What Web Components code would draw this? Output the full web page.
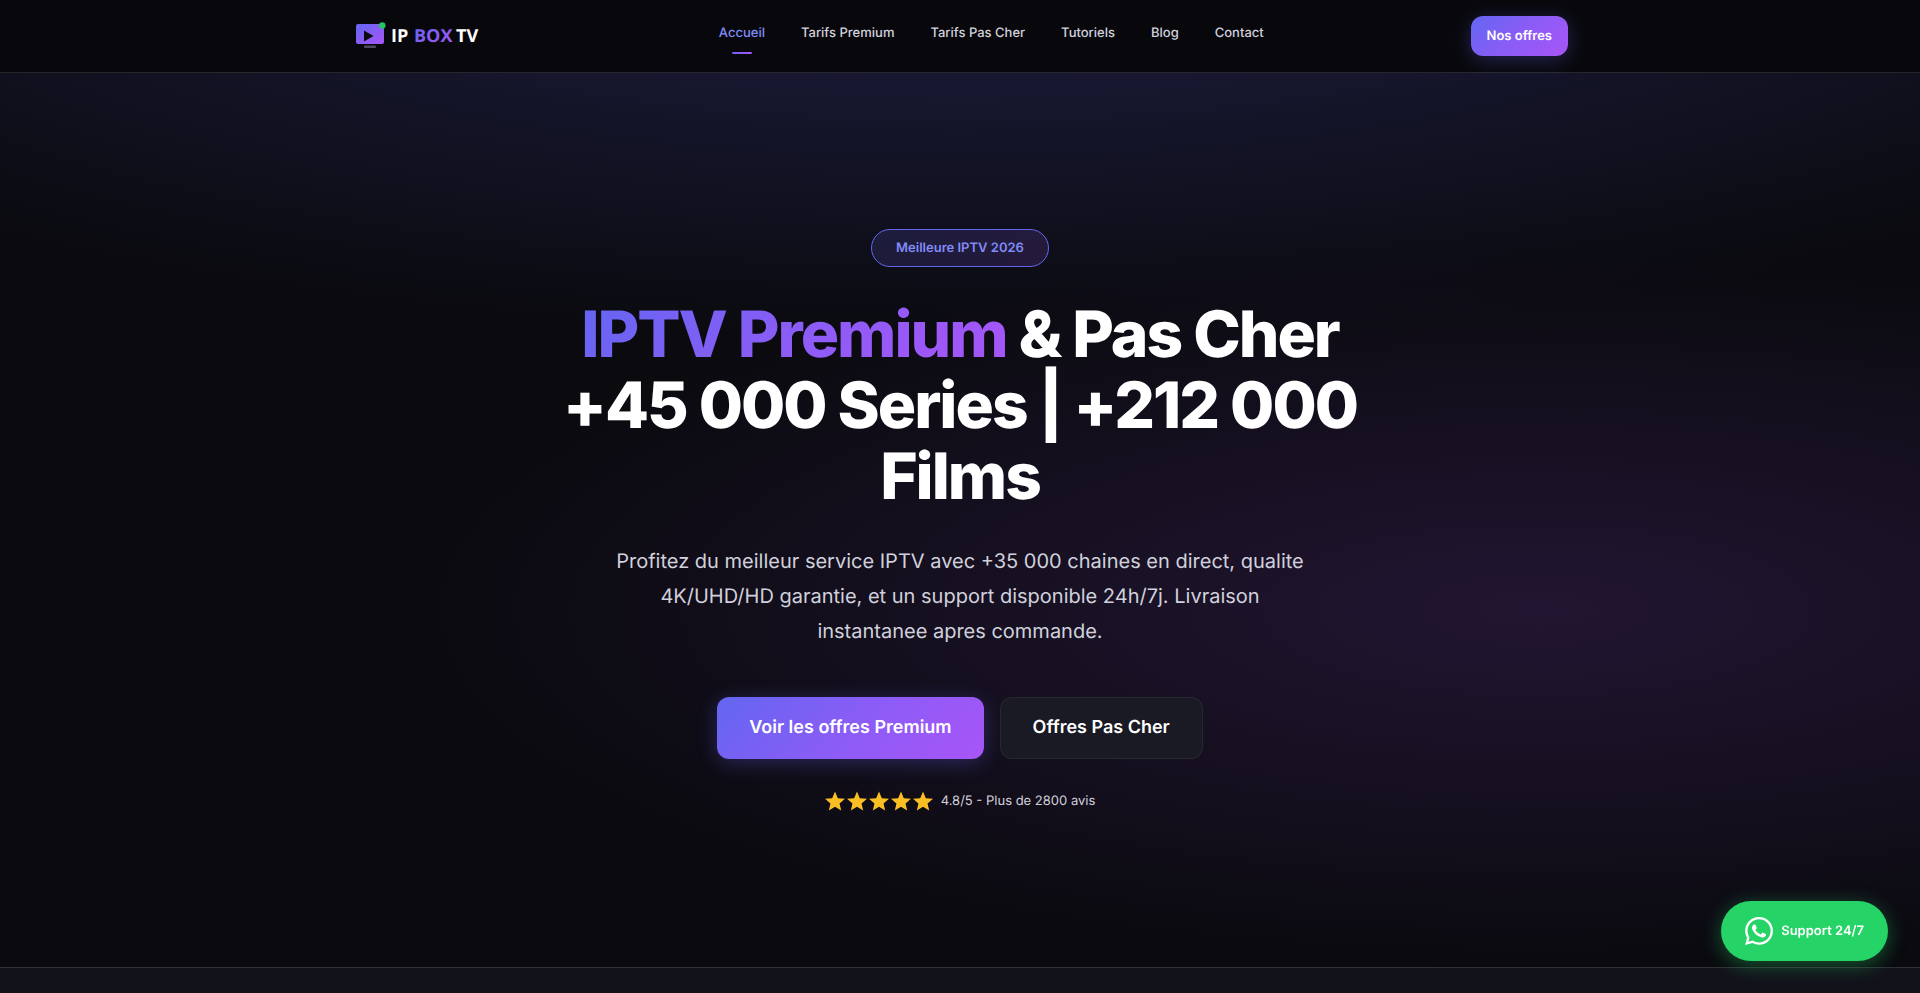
<!DOCTYPE html>
<html lang="fr">
<head>
<meta charset="utf-8">
<meta name="viewport" content="width=device-width, initial-scale=1">
<title>IP BOX TV</title>
<style>
  :root {
    --bg: #0a0a0f;
    --bg-alt: #12121a;
    --card: #1a1a24;
    --text: #ffffff;
    --muted: #d1d1dd;
    --indigo: #6366f1;
    --indigo-light: #818cf8;
    --gradient: linear-gradient(135deg, #6366f1 0%, #8b5cf6 50%, #a855f7 100%);
    --line: rgba(255, 255, 255, 0.13);
  }
  body {
    display: flex;
    flex-direction: column;
    min-height: 100vh;
    margin: 0;
    background: var(--bg);
    color: var(--text);
    font-family: Inter, "Liberation Sans", sans-serif;
    text-rendering: geometricPrecision;
    overflow-x: hidden;
  }
  main { display: flex; flex: 1; flex-direction: column; }
  next-section { flex: 1; }
</style>
</head>
<body>
<site-header>
  <brand-logo slot="logo"></brand-logo>
  <nav-link href="#accueil" active>Accueil</nav-link>
  <nav-link href="#premium">Tarifs Premium</nav-link>
  <nav-link href="#pas-cher">Tarifs Pas Cher</nav-link>
  <nav-link href="#tutoriels">Tutoriels</nav-link>
  <nav-link href="#blog">Blog</nav-link>
  <nav-link href="#contact">Contact</nav-link>
  <cta-link slot="action" size="small" href="#offres">Nos offres</cta-link>
</site-header>

<main>
  <hero-section>
    <span slot="badge">Meilleure IPTV 2026</span>
    <span slot="accent">IPTV Premium</span>
    <span slot="title">&amp; Pas Cher</span>
    <span slot="subtitle">+45 000 Series | +212 000 Films</span>
    <span slot="lead">Profitez du meilleur service IPTV avec +35 000 chaines en direct, qualite 4K/UHD/HD garantie, et un support disponible 24h/7j. Livraison instantanee apres commande.</span>
    <cta-link slot="actions" href="#premium">Voir les offres Premium</cta-link>
    <cta-link slot="actions" variant="secondary" href="#pas-cher">Offres Pas Cher</cta-link>
    <star-rating slot="rating" value="5">4.8/5 - Plus de 2800 avis</star-rating>
  </hero-section>
  <next-section></next-section>
</main>

<support-button href="#support">Support 24/7</support-button>

<script>
(function () {
  function define(name, html, setup) {
    var tpl = document.createElement('template');
    tpl.innerHTML = html;
    customElements.define(name, class extends HTMLElement {
      constructor() {
        super();
        this.attachShadow({ mode: 'open' }).appendChild(tpl.content.cloneNode(true));
      }
      connectedCallback() { if (setup) setup(this, this.shadowRoot); }
    });
  }

  function linkHref(host, root) {
    root.querySelector('a').href = host.getAttribute('href') || '#';
  }

  define('brand-logo', `
    <style>
      :host { display: block; }
      a { display: block; }
      svg { display: block; }
      text { font: 700 18px "Open Sans", "Noto Sans", sans-serif; }
    </style>
    <a href="#" aria-label="IP BOX TV">
      <svg width="160" height="40" viewBox="0 0 160 40">
        <defs>
          <linearGradient id="g" x1="0" y1="0" x2="1" y2="1">
            <stop offset="0" stop-color="#6366f1"/>
            <stop offset="1" stop-color="#a855f7"/>
          </linearGradient>
        </defs>
        <rect x="4" y="8" width="28" height="20" rx="2" fill="url(#g)"/>
        <path d="M12 14.500v11l9.500-5.500z" fill="#0a0a0f"/>
        <rect x="12" y="29.500" width="12" height="2.500" rx="1" fill="#4b4b60"/>
        <circle cx="30.300" cy="9.500" r="3.200" fill="#22c55e"/>
        <text x="39" y="26" fill="#fff">IP</text>
        <text x="62" y="26" fill="url(#g)">BOX</text>
        <text x="104" y="26" fill="#fff">TV</text>
      </svg>
    </a>`);

  define('nav-link', `
    <style>
      :host { display: block; }
      a {
        display: grid;
        justify-items: center;
        row-gap: 9px;
        padding-top: 5px;
        color: var(--muted);
        font-size: 13px;
        font-weight: 500;
        line-height: 20px;
        text-decoration: none;
        white-space: nowrap;
      }
      a::after { content: ""; width: 20px; height: 2px; border-radius: 1px; }
      :host([active]) a { color: var(--indigo-light); }
      :host([active]) a::after { background: var(--gradient); }
    </style>
    <a><slot></slot></a>`, linkHref);

  // variant="secondary" is the dark card style, size="small" the header one
  define('cta-link', `
    <style>
      :host { display: block; }
      a {
        display: block;
        box-sizing: border-box;
        padding: 20px 32px;
        border-radius: 12px;
        background: var(--gradient);
        box-shadow: 0 4px 20px rgba(99, 102, 241, 0.3);
        color: #fff;
        font-size: 18px;
        font-weight: 600;
        line-height: 22px;
        text-decoration: none;
        white-space: nowrap;
      }
      :host([size="small"]) a { padding: 10px 16px; font-size: 13px; line-height: 20px; }
      :host([variant="secondary"]) a {
        padding: 19px 32px;
        border: 1px solid rgba(255, 255, 255, 0.06);
        background: var(--card);
        box-shadow: none;
      }
    </style>
    <a><slot></slot></a>`, linkHref);

  define('site-header', `
    <style>
      :host { display: block; border-bottom: 1px solid var(--line); background: #08080c; }
      .bar {
        display: flex;
        align-items: center;
        justify-content: space-between;
        box-sizing: border-box;
        max-width: 1280px;
        margin: 0 auto;
        padding: 16px 32px;
      }
      nav { display: flex; gap: 36px; }
    </style>
    <header class="bar">
      <slot name="logo"></slot>
      <nav><slot></slot></nav>
      <slot name="action"></slot>
    </header>`);

  define('hero-section', `
    <style>
      :host {
        display: flex;
        align-items: center;
        justify-content: center;
        box-sizing: border-box;
        min-height: 90vh;
        padding: 64px 32px;
        background:
          radial-gradient(ellipse 80% 50% at 50% -20%, rgba(99, 102, 241, 0.25), transparent),
          radial-gradient(ellipse 60% 40% at 80% 60%, rgba(168, 85, 247, 0.15), transparent);
      }
      .content {
        display: flex;
        flex-direction: column;
        align-items: center;
        max-width: 800px;
        text-align: center;
      }
      .badge {
        padding: 8px 24px;
        border: 1px solid var(--indigo);
        border-radius: 20px;
        background: linear-gradient(135deg, rgba(99, 102, 241, 0.15), rgba(168, 85, 247, 0.15));
        color: var(--indigo-light);
        font-size: 13px;
        font-weight: 600;
        line-height: 20px;
      }
      h1 {
        margin: 32px 0;
        font-size: 64px;
        font-weight: 800;
        line-height: 71px;
        letter-spacing: -2px;
      }
      .line { display: block; }
      .accent {
        background: var(--gradient);
        -webkit-background-clip: text;
        background-clip: text;
        color: transparent;
      }
      p {
        max-width: 700px;
        margin: 0 0 48px;
        color: var(--muted);
        font-size: 20px;
        line-height: 35px;
      }
      .actions { display: flex; flex-wrap: wrap; justify-content: center; gap: 16px; margin-bottom: 32px; }
    </style>
    <div class="content">
      <div class="badge"><slot name="badge"></slot></div>
      <h1>
        <span class="line"><span class="accent"><slot name="accent"></slot></span> <slot name="title"></slot></span>
        <span class="line"><slot name="subtitle"></slot></span>
      </h1>
      <p><slot name="lead"></slot></p>
      <div class="actions"><slot name="actions"></slot></div>
      <slot name="rating"></slot>
    </div>`);

  define('star-rating', `
    <style>
      :host { display: flex; align-items: center; gap: 8px; color: var(--muted); font-size: 13px; line-height: 20px; }
      .stars { display: flex; gap: 2px; }
      svg { display: block; fill: #fbbf24; }
    </style>
    <div class="stars" aria-hidden="true"></div>
    <span><slot></slot></span>`, function (host, root) {
    var star = '<svg width="20" height="20" viewBox="2 1.500 20 20"><path d="M12 17.270L18.180 21l-1.640-7.030L22 9.240l-7.190-.610L12 2 9.190 8.630 2 9.240l5.460 4.730L5.820 21z"/></svg>';
    root.querySelector('.stars').innerHTML = star.repeat(Number(host.getAttribute('value')));
  });

  define('next-section', `
    <style>
      :host { display: block; border-top: 1px solid var(--line); background: var(--bg-alt); }
    </style>`);

  define('support-button', `
    <style>
      :host { position: fixed; right: 32px; bottom: 32px; }
      a {
        display: flex;
        align-items: center;
        gap: 8px;
        padding: 16px 24px;
        border-radius: 30px;
        background: #25d366;
        box-shadow: 0 4px 20px rgba(37, 211, 102, 0.4);
        color: #fff;
        font-size: 13px;
        font-weight: 600;
        line-height: 20px;
        text-decoration: none;
      }
      svg { display: block; fill: #fff; }
    </style>
    <a>
      <svg width="28" height="28" viewBox="0 0 24 24" aria-hidden="true"><path d="M17.472 14.382c-.297-.149-1.758-.867-2.030-.967-.273-.099-.471-.148-.670.150-.197.297-.767.966-.940 1.164-.173.199-.347.223-.644.075-.297-.150-1.255-.463-2.390-1.475-.883-.788-1.480-1.761-1.653-2.059-.173-.297-.018-.458.130-.606.134-.133.298-.347.446-.520.149-.174.198-.298.298-.497.099-.198.050-.371-.025-.520-.075-.149-.669-1.612-.916-2.207-.242-.579-.487-.500-.669-.510-.173-.008-.371-.010-.570-.010-.198 0-.520.074-.792.372-.272.297-1.040 1.016-1.040 2.479 0 1.462 1.065 2.875 1.213 3.074.149.198 2.096 3.200 5.077 4.487.709.306 1.262.489 1.694.625.712.227 1.360.195 1.871.118.571-.085 1.758-.719 2.006-1.413.248-.694.248-1.289.173-1.413-.074-.124-.272-.198-.570-.347m-5.421 7.403h-.004a9.870 9.870 0 01-5.031-1.378l-.361-.214-3.741.982.998-3.648-.235-.374a9.860 9.860 0 01-1.510-5.260c.001-5.450 4.436-9.884 9.888-9.884 2.640 0 5.122 1.030 6.988 2.898a9.825 9.825 0 012.893 6.994c-.003 5.450-4.437 9.884-9.885 9.884m8.413-18.297A11.815 11.815 0 0012.050 0C5.495 0 .160 5.335.157 11.892c0 2.096.547 4.142 1.588 5.945L.057 24l6.305-1.654a11.882 11.882 0 005.683 1.448h.005c6.554 0 11.890-5.335 11.893-11.893a11.821 11.821 0 00-3.480-8.413z"/></svg>
      <span><slot></slot></span>
    </a>`, linkHref);
})();
</script>
</body>
</html>
